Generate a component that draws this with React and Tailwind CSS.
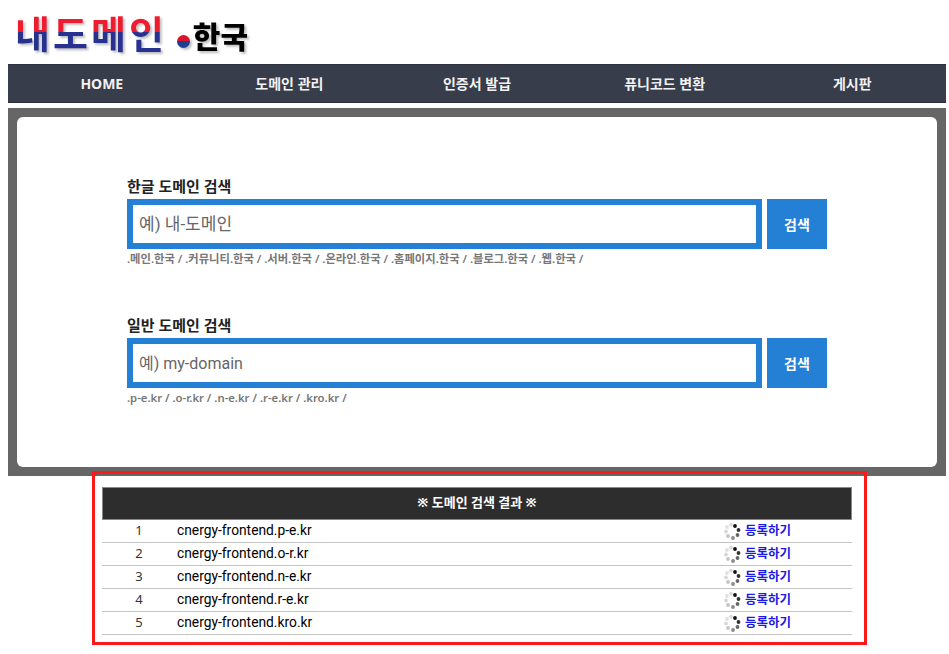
const font = { fontFamily: '"Noto Sans", "Noto Sans CJK KR", sans-serif' };
const narrow = { fontFamily: 'Roboto, "Noto Sans CJK KR", sans-serif' };

const menus = ["HOME", "도메인 관리", "인증서 발급", "퓨니코드 변환", "게시판"];
const results = [
  "cnergy-frontend.p-e.kr",
  "cnergy-frontend.o-r.kr",
  "cnergy-frontend.n-e.kr",
  "cnergy-frontend.r-e.kr",
  "cnergy-frontend.kro.kr",
];

function Spinner() {
  const dots = [
    [11, 3, "#111"],
    [14.5, 7, "#333"],
    [13.5, 12, "#666"],
    [9, 15, "#8a8a8a"],
    [4, 13, "#c4c4c4"],
    [2, 8.5, "#d8d8d8"],
    [3, 4, "#e0e0e0"],
    [7, 1.8, "#dcdcdc"],
  ];
  return (
    <svg className="w-[17px] h-[17px] shrink-0" viewBox="0 0 17 17">
      {dots.map(([x, y, c], i) => (
        <circle key={i} cx={x} cy={y} r="1.9" fill={c} />
      ))}
    </svg>
  );
}

function SearchBlock({ title, placeholder, hint, className, inputSize }) {
  return (
    <div className={className}>
      <h2 className="text-[15px] leading-[20px] font-bold text-[#222] mb-[3px]">{title}</h2>
      <div className="flex gap-[5px] h-[50px]">
        <input
          className={`w-[635px] h-[50px] border-[6px] border-[#2480d4] bg-white px-[6px] text-[#555] placeholder:text-[#666] outline-none ${inputSize}`}
          style={narrow}
          placeholder={placeholder}
        />
        <button className="w-[60px] h-[50px] bg-[#2480d4] text-white text-[14px] font-bold">검색</button>
      </div>
      <p className="mt-[1px] text-[11.3px] leading-[17px] font-semibold text-[#777]">{hint}</p>
    </div>
  );
}

export default function App() {
  return (
    <div className="bg-white w-[949px] h-[654px] overflow-hidden text-[#222]" style={font}>
      <div className="h-[64px] pl-[15px] pt-[7px] flex items-start">
        <div
          className="flex items-baseline text-[38px] leading-[50px] font-bold tracking-[3px] drop-shadow-[2px_2px_1px_rgba(0,0,0,0.25)]"
          style={{ fontFamily: '"Noto Sans CJK KR", sans-serif' }}
        >
          <span className="bg-gradient-to-b from-[#ee1c2e] from-50% to-[#27318f] to-50% bg-clip-text text-transparent">
            내도메인
          </span>
          <span className="w-[13px] h-[13px] ml-[10px] mr-[3px] rounded-full bg-gradient-to-b from-[#d8152c] from-50% to-[#1d3f8f] to-50%" />
          <span className="text-[30px] tracking-normal text-black font-black">한국</span>
        </div>
      </div>

      <nav className="mx-[8px] w-[938px] h-[39px] bg-[#383d4c] border-y border-[#2c303c] grid grid-cols-5 items-center">
        {menus.map((m) => (
          <a key={m} className="text-center text-[14px] font-bold text-[#f2f2f2]">
            {m}
          </a>
        ))}
      </nav>

      <section className="mt-[5px] mx-[8px] w-[938px] h-[368px] bg-[#666] p-[9px]">
        <div className="bg-white rounded-[6px] h-[350px] pl-[110px] pt-[59px]">
          <SearchBlock
            title="한글 도메인 검색"
            placeholder="예) 내-도메인"
            inputSize="text-[17px]"
            hint=".메인.한국 / .커뮤니티.한국 / .서버.한국 / .온라인.한국 / .홈페이지.한국 / .블로그.한국 / .웹.한국 /"
          />
          <SearchBlock
            className="mt-[48px]"
            title="일반 도메인 검색"
            placeholder="예) my-domain"
            inputSize="text-[16px]"
            hint=".p-e.kr / .o-r.kr / .n-e.kr / .r-e.kr / .kro.kr /"
          />
        </div>
      </section>

      <section className="relative -mt-[5px] ml-[92px] w-[775px] h-[174px] border-[3px] border-[#fb1a1a] pt-[13px] px-[7px]">
        <div className="w-[750px]">
          <div className="h-[33px] pb-[2px] bg-[#2d2d2d] border border-[#888] flex items-center justify-center text-white text-[13px] font-bold">
            ※ 도메인 검색 결과 ※
          </div>
          {results.map((r, i) => (
            <div key={r} className="h-[23px] border-b border-[#c4c4c4] flex items-center text-[13px]">
              <span className="w-[75px] pr-[1px] text-center text-[#333]">{i + 1}</span>
              <span className="w-[547px] pb-[2px] text-[13.8px] font-normal text-black" style={narrow}>
                {r}
              </span>
              <span className="flex items-center gap-[4px] text-[12.5px] font-bold text-[#1a1ae6]">
                <Spinner />
                등록하기
              </span>
            </div>
          ))}
        </div>
      </section>
    </div>
  );
}
